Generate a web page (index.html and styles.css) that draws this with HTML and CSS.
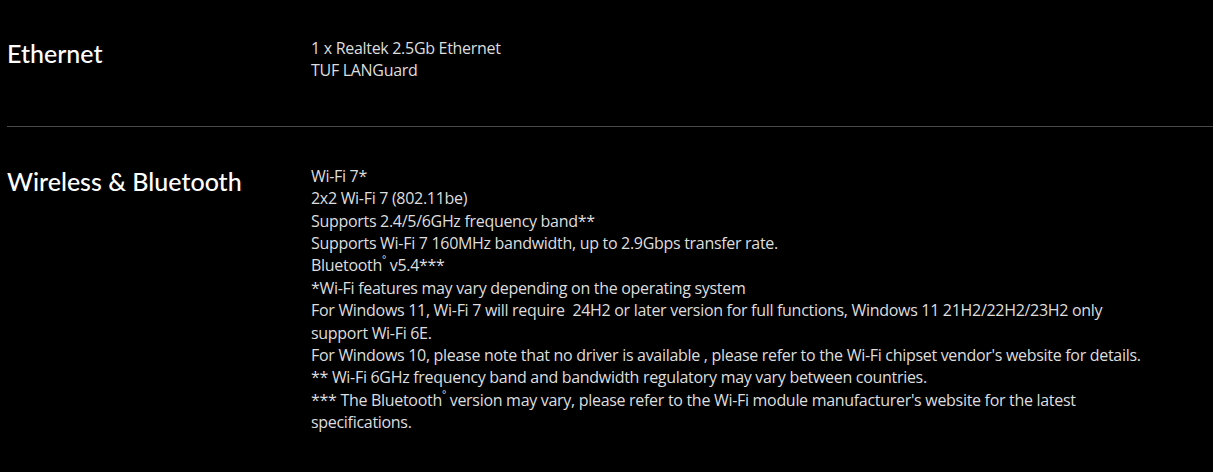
FILE: index.html
```html
<!DOCTYPE html>
<html lang="en">
<head>
    <meta charset="UTF-8">
    <meta name="viewport" content="width=device-width, initial-scale=1.0">
    <title>Specifications</title>
    <link rel="stylesheet" href="styles.css">
</head>
<body>

<div class="spec-list">
    <div class="spec-row">
        <h3 class="spec-title">Ethernet</h3>
        <div class="spec-text">
            1 x Realtek 2.5Gb Ethernet<br>
            TUF LANGuard
        </div>
    </div>

    <div class="spec-row">
        <h3 class="spec-title">Wireless &amp; Bluetooth</h3>
        <div class="spec-text">
            Wi-Fi 7*<br>
            2x2 Wi-Fi 7 (802.11be)<br>
            Supports 2.4/5/6GHz frequency band**<br>
            Supports Wi-Fi 7 160MHz bandwidth, up to 2.9Gbps transfer rate.<br>
            Bluetooth<sup>°</sup> v5.4***<br>
            *Wi-Fi features may vary depending on the operating system<br>
            For Windows 11, Wi-Fi 7 will require&nbsp; 24H2 or later version for full functions, Windows 11 21H2/22H2/23H2 only<br>
            support Wi-Fi 6E.<br>
            For Windows 10, please note that no driver is available , please refer to the Wi-Fi chipset vendor's website for details.<br>
            ** Wi-Fi 6GHz frequency band and bandwidth regulatory may vary between countries.<br>
            *** The Bluetooth<sup>°</sup> version may vary, please refer to the Wi-Fi module manufacturer's website for the latest specifications.
        </div>
    </div>
</div>

</body>
</html>
```

FILE: styles.css
```css
body {
    margin: 0;
    background-color: #000;
    font-family: "Open Sans", sans-serif;
}
.spec-list {
    padding: 0 0 0 7px;
}
.spec-row {
    display: flex;
    padding: 38px 0 43px 0;
    border-bottom: 1px solid #4a4a4a;
}
.spec-row:first-child {
    padding-top: 37px;
    padding-bottom: 44px;
}
.spec-row:last-child {
    border-bottom: none;
}
.spec-title {
    width: 304px;
    margin: 0;
    color: #fff;
    font-family: "Lato", sans-serif;
    font-size: 25px;
    font-weight: 500;
    line-height: 32px;
    flex-shrink: 0;
}
.spec-text {
    width: 866px;
    color: #dedede;
    font-size: 16px;
    line-height: 22.4px;
    letter-spacing: -0.3px;
}
.spec-text sup {
    font-size: 10px;
    line-height: 1;
    vertical-align: top;
}
```
